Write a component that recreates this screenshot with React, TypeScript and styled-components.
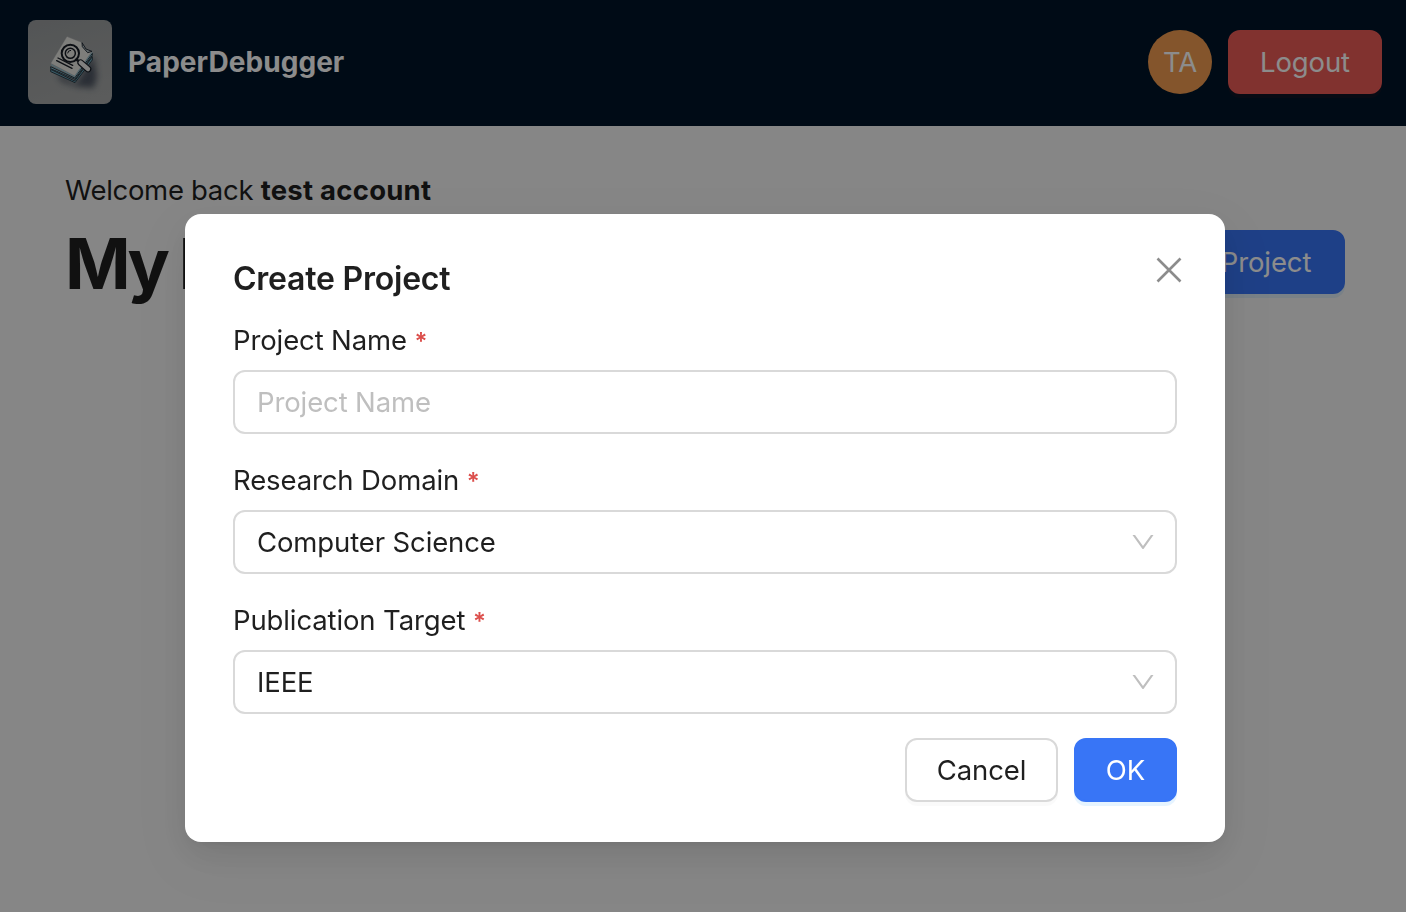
import React from "react";
import styled, { createGlobalStyle } from "styled-components";

const GlobalStyle = createGlobalStyle`
  * { box-sizing: border-box; }
  html, body { margin: 0; padding: 0; background: #f5f5f5; }
  body {
    font-family: Inter, "Liberation Sans", sans-serif;
    font-size: 27.5px;
    line-height: 44px;
    letter-spacing: -0.12px;
    color: #1f1f1f;
    overflow: hidden;
  }
  button, input { font: inherit; letter-spacing: inherit; }
`;

const Page = styled.div`
  min-height: 912px;
`;

const Header = styled.header`
  display: flex;
  align-items: center;
  height: 126px;
  padding: 0 24px 2px 28px;
  background: #001529;
`;

const LogoBox = styled.svg`
  display: block;
  width: 84px;
  height: 84px;
  border-radius: 8px;
`;

const Brand = styled.span`
  flex: 1;
  padding-left: 16px;
  color: #fff;
  font-size: 28px;
  font-weight: 700;
  letter-spacing: 0.05px;
`;

const Avatar = styled.div`
  display: flex;
  align-items: center;
  justify-content: center;
  width: 64px;
  height: 64px;
  margin-right: 16px;
  border-radius: 50%;
  background: #f09c50;
  color: #fff;
`;

type Variant = "primary" | "danger" | "plain";

const fills: Record<Variant, string> = { primary: "#3875f6", danger: "#ec5b57", plain: "#fff" };
const shadows: Record<Variant, string> = {
  primary: "0 4px 0 rgba(5, 145, 255, 0.1)",
  danger: "0 4px 0 rgba(255, 38, 5, 0.06)",
  plain: "0 4px 0 rgba(0, 0, 0, 0.02)",
};

const Button = styled.button<{ $variant: Variant; $width: number }>`
  width: ${(p) => p.$width}px;
  height: 64px;
  padding: 0;
  border: 2px solid ${(p) => (p.$variant === "plain" ? "#d9d9d9" : fills[p.$variant])};
  border-radius: 12px;
  background: ${(p) => fills[p.$variant]};
  box-shadow: ${(p) => shadows[p.$variant]};
  color: ${(p) => (p.$variant === "plain" ? "#1f1f1f" : "#fff")};
  text-align: center;
  white-space: nowrap;
`;

const Main = styled.main`
  padding: 42px 61px 0 65px;
`;

const Welcome = styled.div`
  height: 44px;
  letter-spacing: -0.3px;
  strong { font-weight: 700; letter-spacing: 0.25px; }
`;

const TitleRow = styled.div`
  display: flex;
  align-items: center;
  justify-content: space-between;
  height: 100px;
`;

const PageTitle = styled.h1`
  margin: 0;
  padding-top: 3px;
  font-size: 70.5px;
  line-height: 96px;
  font-weight: 700;
  letter-spacing: -4px;
`;

const Mask = styled.div`
  position: fixed;
  inset: 0;
  display: flex;
  align-items: flex-start;
  padding: 214px 0 0 185px;
  background: rgba(0, 0, 0, 0.45);
`;

const Dialog = styled.section`
  position: relative;
  width: 1040px;
  height: 628px;
  padding: 41px 48px 40px;
  border-radius: 16px;
  background: #fff;
  box-shadow: 0 12px 32px 0 rgba(0, 0, 0, 0.08), 0 6px 12px -8px rgba(0, 0, 0, 0.12),
    0 18px 56px 16px rgba(0, 0, 0, 0.05);
`;

const DialogTitle = styled.h2`
  margin: 0 0 15px;
  font-size: 32px;
  line-height: 48px;
  font-weight: 600;
  letter-spacing: -0.23px;
`;

const CloseButton = styled.button`
  position: absolute;
  top: 42px;
  right: 42px;
  display: flex;
  padding: 0;
  border: 0;
  background: none;
  color: #8c8c8c;
`;

const Field = styled.label`
  display: block;
  margin-bottom: 24px;
`;

const FieldLabel = styled.span`
  display: block;
  height: 44px;
  margin-bottom: 8px;
`;

const Required = styled.span`
  color: #dc4f4c;
  font-size: 24px;
  font-weight: 600;
`;

const boxStyle = `
  width: 100%;
  height: 64px;
  padding: 0 18px 0 22px;
  border: 2px solid #d9d9d9;
  border-radius: 12px;
  background: #fff;
`;

const TextInput = styled.input`
  ${boxStyle}
  display: block;
  outline: none;
  &::placeholder { color: #bfbfbf; opacity: 1; }
`;

const SelectBox = styled.div`
  ${boxStyle}
  display: flex;
  align-items: center;
  justify-content: space-between;
`;

const Footer = styled.footer`
  display: flex;
  justify-content: flex-end;
  gap: 16px;
`;

const Logo = () => (
  <LogoBox viewBox="0 0 252 252">
    <defs>
      <linearGradient id="bg" x1="0.3" y1="0" x2="0.6" y2="1">
        <stop offset="0" stopColor="#999c9d" />
        <stop offset="1" stopColor="#a6a8a8" />
      </linearGradient>
      <filter id="soft" x="-50%" y="-50%" width="200%" height="200%">
        <feGaussianBlur stdDeviation="9" />
      </filter>
    </defs>
    <rect width="252" height="252" fill="url(#bg)" />
    <path d="M85 158L145 190L196 105L207 170L197 204L150 200L100 184Z" fill="#303b4b" opacity=".75" filter="url(#soft)" />
    <g strokeLinejoin="round" strokeWidth="3" stroke="#2b3b45">
      <path d="M68 148L140 183L193 110V120L141 188L68 155Z" fill="#67a4b8" />
      <path d="M68 140L140 174L193 100V106L141 178L68 146Z" fill="#85bed0" />
      <path d="M69 130L117 50L162 68L169 84L192 94L140 167Z" fill="#e6e5e1" stroke="#c9cccb" strokeWidth="1" />
      <path d="M162 68L163 80L179 98L192 94L174 87Z" fill="#b8c4c8" stroke="#222b34" />
    </g>
    <path d="M69 134L140 170L192 97" fill="none" stroke="#94c5d3" strokeWidth="3" />
    <g fill="none" stroke="#171d25" strokeLinecap="round">
      <circle cx="127" cy="100" r="26" strokeWidth="6" />
      <circle cx="127" cy="100" r="15" strokeWidth="4.500" />
      <path d="M119 99Q120 91 128 91" strokeWidth="3" />
      <path d="M90 114L134 136M86 122L132 145" strokeWidth="4" />
      <path d="M145 119L159 127" strokeWidth="8" />
      <path d="M158 128L180 147" strokeWidth="20" />
    </g>
    <path d="M158 128L180 147" stroke="#e9e9e7" strokeWidth="13" strokeLinecap="round" />
  </LogoBox>
);

const Chevron = () => (
  <svg width="28" height="28" viewBox="0 0 1024 1024" fill="#bfbfbf">
    <path d="M884 256h-75c-5.100 0-9.900 2.500-12.900 6.600L512 654.200 227.900 262.600c-3-4.100-7.800-6.600-12.900-6.600h-75c-6.500 0-10.300 7.400-6.500 12.700l352.600 486.100c12.800 17.600 39 17.600 51.700 0l352.600-486.100c3.900-5.300.1-12.700-6.400-12.700z" />
  </svg>
);

const LabelledField = ({ label, children }: { label: string; children: React.ReactNode }) => (
  <Field>
    <FieldLabel>
      {label} <Required>*</Required>
    </FieldLabel>
    {children}
  </Field>
);

export default function App() {
  return (
    <Page>
      <GlobalStyle />
      <Header>
        <Logo />
        <Brand>PaperDebugger</Brand>
        <Avatar>TA</Avatar>
        <Button $variant="danger" $width={154}>Logout</Button>
      </Header>
      <Main>
        <Welcome>
          Welcome back <strong>test account</strong>
        </Welcome>
        <TitleRow>
          <PageTitle>My Projects</PageTitle>
          <Button $variant="primary" $width={224}>New Project</Button>
        </TitleRow>
      </Main>
      <Mask>
        <Dialog role="dialog" aria-label="Create Project">
          <DialogTitle>Create Project</DialogTitle>
          <CloseButton aria-label="Close">
            <svg width="28" height="28" viewBox="0 0 28 28" fill="none" stroke="currentColor" strokeWidth="2.6">
              <path d="M2.500 2.500L25.500 25.500M25.500 2.500L2.500 25.500" />
            </svg>
          </CloseButton>
          <LabelledField label="Project Name">
            <TextInput placeholder="Project Name" />
          </LabelledField>
          <LabelledField label="Research Domain">
            <SelectBox>
              Computer Science
              <Chevron />
            </SelectBox>
          </LabelledField>
          <LabelledField label="Publication Target">
            <SelectBox>
              IEEE
              <Chevron />
            </SelectBox>
          </LabelledField>
          <Footer>
            <Button $variant="plain" $width={153}>Cancel</Button>
            <Button $variant="primary" $width={103}>OK</Button>
          </Footer>
        </Dialog>
      </Mask>
    </Page>
  );
}
